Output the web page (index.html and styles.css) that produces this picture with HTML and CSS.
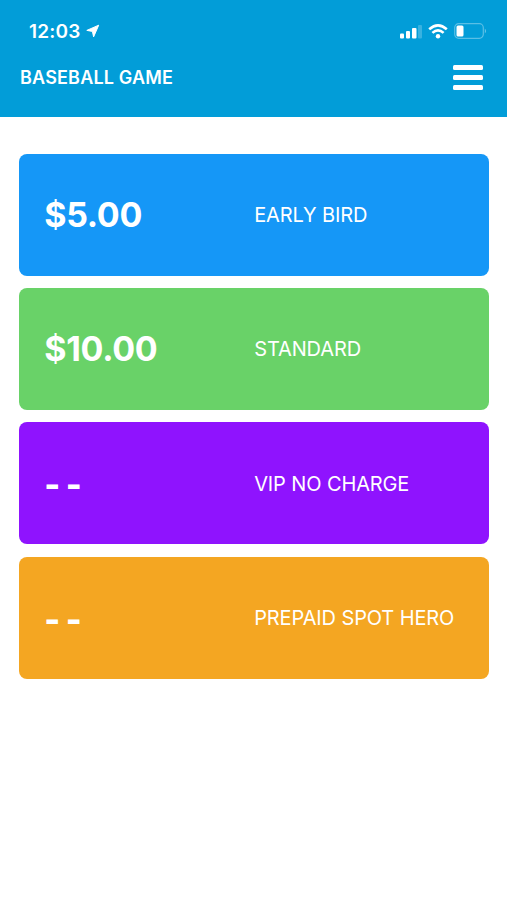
FILE: index.html
```html
<!DOCTYPE html>
<html lang="en">
<head>
    <meta charset="UTF-8">
    <meta name="viewport" content="width=device-width, initial-scale=1.0">
    <title>Baseball Game</title>
    <link rel="stylesheet" href="styles.css">
</head>
<body>
    <header class="header">
        <div class="status-bar">
            <div class="clock">
                <span class="time">12:03</span>
                <svg width="14" height="14" viewBox="0 0 14 14"><path d="M12.7 1.2 L0.8 6.4 L6.4 7.4 L7.6 12.9 Z" fill="#fff" stroke="#fff" stroke-width="1" stroke-linejoin="round"/></svg>
            </div>
            <div class="status-icons">
                <svg width="22" height="15" viewBox="0 0 22 15" fill="#fff">
                    <rect x="0" y="9.5" width="4" height="5" rx="1"/>
                    <rect x="6" y="7" width="4" height="7.5" rx="1"/>
                    <rect x="12" y="4" width="4.5" height="10.5" rx="1"/>
                    <rect x="18" y="1" width="4" height="13.5" rx="1" opacity="0.22"/>
                </svg>
                <svg class="wifi" width="20" height="15" viewBox="0 0 20 15" fill="none" stroke="#fff" stroke-width="2.6">
                    <path d="M1.2 5.3 Q10 -2.5 18.8 5.3"/>
                    <path d="M4.4 8.9 Q10 3.8 15.6 8.9"/>
                    <circle cx="10" cy="12.2" r="2.2" fill="#fff" stroke="none"/>
                </svg>
                <svg class="battery" width="33" height="16" viewBox="0 0 33 16">
                    <rect x="0.7" y="0.7" width="28.6" height="14.6" rx="4" fill="none" stroke="#fff" stroke-opacity="0.35" stroke-width="1.2"/>
                    <rect x="2.5" y="2.5" width="7" height="11" rx="1.5" fill="#fff"/>
                    <path d="M30.8 5.5 Q33.4 8 30.8 10.5 Z" fill="#fff" opacity="0.4"/>
                </svg>
            </div>
        </div>
        <div class="nav-bar">
            <h1>BASEBALL GAME</h1>
            <button class="menu-button" aria-label="Menu">
                <span></span>
                <span></span>
                <span></span>
            </button>
        </div>
    </header>
    <main class="rates">
        <div class="rate early-bird">
            <div class="price">$5.00</div>
            <div class="name">EARLY BIRD</div>
        </div>
        <div class="rate standard">
            <div class="price">$10.00</div>
            <div class="name">STANDARD</div>
        </div>
        <div class="rate vip">
            <div class="price no-charge">- -</div>
            <div class="name">VIP NO CHARGE</div>
        </div>
        <div class="rate prepaid">
            <div class="price no-charge">- -</div>
            <div class="name">PREPAID SPOT HERO</div>
        </div>
    </main>
</body>
</html>
```
FILE: styles.css
```css
* {
    box-sizing: border-box;
}
body {
    font-family: Inter, "Liberation Sans", sans-serif;
    background: #fff;
    color: #fff;
    margin: 0;
}
.header {
    height: 117px;
    background-color: #029dd8;
}
.status-bar {
    display: flex;
    justify-content: space-between;
    align-items: center;
    height: 62px;
    padding: 0 20px 0 29px;
}
.clock {
    display: flex;
    align-items: center;
    gap: 5px;
}
.time {
    font-size: 19px;
    font-weight: 600;
    letter-spacing: 0.2px;
}
.status-icons {
    display: flex;
    align-items: center;
}
.wifi {
    margin-left: 6px;
}
.battery {
    margin-left: 6px;
}
.nav-bar {
    display: flex;
    justify-content: space-between;
    align-items: center;
    height: 31px;
    padding: 0 24px 0 20px;
}
h1 {
    margin: 0;
    font-size: 18px;
    font-weight: 600;
    letter-spacing: 0.18px;
}
.menu-button {
    display: flex;
    flex-direction: column;
    gap: 5px;
    width: 30px;
    padding: 0;
    background: none;
    border: none;
}
.menu-button span {
    width: 30px;
    height: 5px;
    background-color: #fff;
    border-radius: 1.5px;
}
.rates {
    display: flex;
    flex-direction: column;
    gap: 12.4px;
    padding: 36.6px 18.4px 0 19.2px;
}
.rate {
    display: grid;
    grid-template-columns: 210px 1fr;
    align-items: center;
    height: 122px;
    padding-left: 25px;
    border-radius: 8px;
}
.price {
    font-size: 34px;
    font-weight: 700;
    letter-spacing: -0.3px;
}
.no-charge {
    padding-top: 3px;
    font-weight: 800;
    letter-spacing: -0.9px;
}
.name {
    padding-top: 1px;
    font-size: 20px;
    letter-spacing: -0.12px;
    white-space: nowrap;
}
.early-bird {
    background-color: #1597f7;
}
.standard {
    background-color: #69d268;
}
.vip {
    background-color: #8f13fe;
}
.prepaid {
    background-color: #f4a622;
}
```
